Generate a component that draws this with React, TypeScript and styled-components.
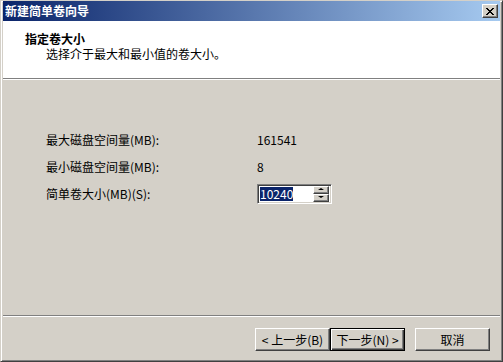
import styled, { createGlobalStyle } from "styled-components";
import { FunctionComponent } from "react";

const GlobalStyle = createGlobalStyle`
  html, body {
    margin: 0;
    padding: 0;
    background: #d4d0c8;
  }
  body {
    font-family: "SimSun", "Noto Sans CJK SC", "DejaVu Sans", sans-serif;
    font-size: 12px;
    color: #000;
  }
`;

const Window = styled.div`
  width: 503px;
  height: 362px;
  box-sizing: border-box;
  background: #d4d0c8;
  border-top: 1px solid #d4d0c8;
  border-left: 1px solid #d4d0c8;
  border-right: 1px solid #404040;
  border-bottom: 1px solid #404040;
  box-shadow: inset 1px 1px 0 #ffffff, inset -1px -1px 0 #808080;
  padding: 0 2px 2px 2px;
  display: flex;
  flex-direction: column;
  overflow: hidden;
`;

const TitleBar = styled.div`
  height: 20px;
  flex-shrink: 0;
  display: flex;
  align-items: center;
  justify-content: space-between;
  padding: 0 2px 0 2px;
  background: linear-gradient(to right, #0a246a, #a6caf0);
`;

const TitleText = styled.div`
  color: #fff;
  font-weight: bold;
  font-size: 12px;
  line-height: 14px;
`;

const CloseBox = styled.div`
  width: 16px;
  height: 14px;
  box-sizing: border-box;
  background: #d4d0c8;
  border-top: 1px solid #fff;
  border-left: 1px solid #fff;
  border-right: 1px solid #404040;
  border-bottom: 1px solid #404040;
  box-shadow: inset -1px -1px 0 #808080;
  display: flex;
  align-items: center;
  justify-content: center;
`;

const Header = styled.div`
  height: 58px;
  flex-shrink: 0;
  background: #fff;
  padding: 10px 0 0 22px;
  box-sizing: border-box;
  border-bottom: 1px solid #808080;
  box-shadow: 0 1px 0 #fff;
  margin-bottom: 1px;
`;

const HeaderTitle = styled.div`
  font-weight: bold;
  line-height: 15px;
`;

const HeaderSub = styled.div`
  padding-left: 21px;
  line-height: 15px;
`;

const Body = styled.div`
  flex: 1;
  padding: 46px 0 0 43px;
  display: grid;
  grid-template-columns: 211px auto;
  grid-auto-rows: 27px;
  align-content: start;
  align-items: center;
`;

const Label = styled.div`
  line-height: 14px;
`;

const Value = styled.div`
  line-height: 14px;
`;

const Spin = styled.div`
  width: 75px;
  height: 20px;
  box-sizing: border-box;
  background: #fff;
  border-top: 1px solid #808080;
  border-left: 1px solid #808080;
  border-right: 1px solid #fff;
  border-bottom: 1px solid #fff;
  box-shadow: inset 1px 1px 0 #404040, inset -1px -1px 0 #d4d0c8;
  display: flex;
  align-items: center;
  padding: 2px;
`;

const SpinText = styled.div`
  flex: 1;
  display: flex;
  align-items: center;
`;

const Selected = styled.span`
  background: #0a246a;
  color: #fff;
  line-height: 14px;
`;

const SpinButtons = styled.div`
  width: 16px;
  height: 16px;
  display: flex;
  flex-direction: column;
`;

const SpinButton = styled.div`
  flex: 1;
  box-sizing: border-box;
  background: #d4d0c8;
  border-top: 1px solid #fff;
  border-left: 1px solid #fff;
  border-right: 1px solid #404040;
  border-bottom: 1px solid #404040;
  box-shadow: inset -1px -1px 0 #808080;
  display: flex;
  align-items: center;
  justify-content: center;
`;

const Arrow = styled.div<{ $down?: boolean }>`
  width: 0;
  height: 0;
  border-left: 3px solid transparent;
  border-right: 3px solid transparent;
  ${(p) =>
    p.$down
      ? "border-top: 2px solid #000; margin-top: -1px;"
      : "border-bottom: 2px solid #000; margin-top: -1px;"}
`;

const Divider = styled.div`
  height: 1px;
  flex-shrink: 0;
  background: #808080;
  border-bottom: 1px solid #fff;
`;

const Footer = styled.div`
  height: 42px;
  flex-shrink: 0;
  display: flex;
  align-items: flex-start;
  justify-content: flex-end;
  padding: 11px 10px 0 0;
  box-sizing: border-box;
`;

const Button = styled.div<{ $default?: boolean; $gap?: number }>`
  width: 75px;
  height: 23px;
  box-sizing: border-box;
  margin-right: ${(p) => p.$gap ?? 0}px;
  background: #d4d0c8;
  display: flex;
  align-items: center;
  justify-content: center;
  line-height: 14px;
  border: 1px solid ${(p) => (p.$default ? "#000" : "transparent")};
  box-shadow: ${(p) =>
    p.$default
      ? "inset 1px 1px 0 #fff, inset -1px -1px 0 #404040, inset -2px -2px 0 #808080"
      : "inset 0 0 0 0 #000"};
  ${(p) =>
    !p.$default &&
    `border-top-color: #fff; border-left-color: #fff; border-right-color: #404040; border-bottom-color: #404040; box-shadow: inset -1px -1px 0 #808080;`}
`;

const Row: FunctionComponent<{ label: string; children: React.ReactNode }> = ({
  label,
  children,
}) => (
  <>
    <Label>{label}</Label>
    <Value>{children}</Value>
  </>
);

export default function App() {
  return (
    <>
      <GlobalStyle />
      <Window>
        <TitleBar>
          <TitleText>新建简单卷向导</TitleText>
          <CloseBox>
            <svg width="8" height="7" viewBox="0 0 8 7">
              <path d="M0 0 L7 7 M1 0 L8 7 M7 0 L0 7 M8 0 L1 7" stroke="#000" strokeWidth="1" />
            </svg>
          </CloseBox>
        </TitleBar>
        <Header>
          <HeaderTitle>指定卷大小</HeaderTitle>
          <HeaderSub>选择介于最大和最小值的卷大小。</HeaderSub>
        </Header>
        <Body>
          <Row label="最大磁盘空间量(MB):">161541</Row>
          <Row label="最小磁盘空间量(MB):">8</Row>
          <Row label="简单卷大小(MB)(S):">
            <Spin>
              <SpinText>
                <Selected>10240</Selected>
              </SpinText>
              <SpinButtons>
                <SpinButton>
                  <Arrow />
                </SpinButton>
                <SpinButton>
                  <Arrow $down />
                </SpinButton>
              </SpinButtons>
            </Spin>
          </Row>
        </Body>
        <Divider />
        <Footer>
          <Button>&lt; 上一步(B)</Button>
          <Button $default $gap={10}>
            下一步(N) &gt;
          </Button>
          <Button>取消</Button>
        </Footer>
      </Window>
    </>
  );
}
